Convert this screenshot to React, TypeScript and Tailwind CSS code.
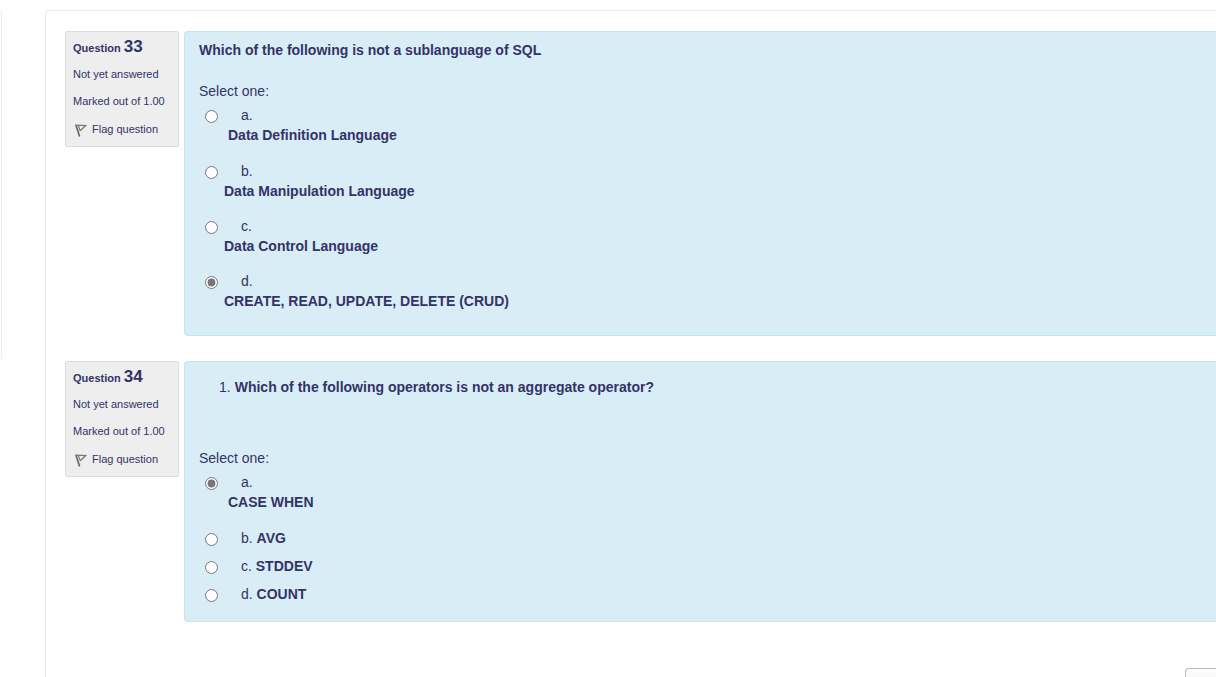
import React from "react";

type Option = { letter: string; text: string; stacked?: boolean; indent?: boolean };

type Question = {
  number: number;
  prompt: string;
  listed?: boolean;
  options: Option[];
  selected: string;
};

const questions: Question[] = [
  {
    number: 33,
    prompt: "Which of the following is not a sublanguage of SQL",
    selected: "d",
    options: [
      { letter: "a", text: "Data Definition Language", stacked: true, indent: true },
      { letter: "b", text: "Data Manipulation Language", stacked: true },
      { letter: "c", text: "Data Control Language", stacked: true },
      { letter: "d", text: "CREATE, READ, UPDATE, DELETE (CRUD)", stacked: true },
    ],
  },
  {
    number: 34,
    prompt: "Which of the following operators is not an aggregate operator?",
    listed: true,
    selected: "a",
    options: [
      { letter: "a", text: "CASE WHEN", stacked: true, indent: true },
      { letter: "b", text: "AVG" },
      { letter: "c", text: "STDDEV" },
      { letter: "d", text: "COUNT" },
    ],
  },
];

function FlagIcon() {
  return (
    <svg viewBox="0 0 12 13" className="mt-[5px] h-[13px] w-3 shrink-0" fill="none" aria-hidden="true">
      <path d="M1 1.2L4.6 12.4" stroke="#666" strokeWidth="1.7" />
      <path d="M0 1.2L10.6 1.7L5.2 6.8" stroke="#777" strokeWidth="1.3" />
      <path d="M3.4 1.6L5.3 7" stroke="#777" strokeWidth="1.2" />
    </svg>
  );
}

function QuestionInfo({ number }: { number: number }) {
  return (
    <aside className="w-[114px] shrink-0 rounded-xs border border-[#dcdcdc] bg-[#eeeeee] px-[7px] pt-[5px] pb-[7px] text-[11px] leading-5">
      <h3 className="mb-1.5 font-bold">
        Question <span className="text-[17px] leading-5">{number}</span>
      </h3>
      <p className="mb-[7px]">Not yet answered</p>
      <p className="mb-2">Marked out of 1.00</p>
      <a href="#flag" className="flex gap-[5px] pl-0.5">
        <FlagIcon />
        Flag question
      </a>
    </aside>
  );
}

function optionSpacing(option: Option) {
  if (option.indent) return "flex pb-4";
  return option.stacked ? "flex pb-[15px]" : "flex pb-2 last:pb-0";
}

function Answer({ option, question }: { option: Option; question: Question }) {
  const id = `q${question.number}-${option.letter}`;
  return (
    <div className={optionSpacing(option)}>
      <input
        type="radio"
        id={id}
        name={`q${question.number}`}
        defaultChecked={question.selected === option.letter}
        className="mt-[5px] ml-1.5 size-[13px] shrink-0 accent-[#767676]"
      />
      <label htmlFor={id} className={option.stacked ? "ml-1.5" : "ml-[23px]"}>
        {option.stacked ? (
          <>
            <span className="block pl-[17px]">{option.letter}.</span>
            <strong className={option.indent ? "block pl-1" : "block"}>{option.text}</strong>
          </>
        ) : (
          <>
            {option.letter}. <strong>{option.text}</strong>
          </>
        )}
      </label>
    </div>
  );
}

function QuestionBlock({ question }: { question: Question }) {
  return (
    <section className="mb-[25px] flex items-start gap-[5px]">
      <QuestionInfo number={question.number} />
      <div
        className={
          question.listed
            ? "min-w-0 flex-1 rounded-l border border-r-0 border-[#bce8f1] bg-[#d9edf7] pt-[15px] pb-[17px] pl-[14px]"
            : "min-w-0 flex-1 rounded-l border border-r-0 border-[#bce8f1] bg-[#d9edf7] pt-2 pb-[9px] pl-[14px]"
        }
      >
        {question.listed ? (
          <ol className="mb-[51px] pl-5">
            <li className="flex gap-1">
              <span>1.</span>
              <strong>{question.prompt}</strong>
            </li>
          </ol>
        ) : (
          <p className="mb-[21px] font-bold">{question.prompt}</p>
        )}
        <fieldset>
          <legend className="mb-1">Select one:</legend>
          {question.options.map((option) => (
            <Answer key={option.letter} option={option} question={question} />
          ))}
        </fieldset>
      </div>
    </section>
  );
}

export default function App() {
  return (
    <div className="flex h-screen items-start gap-[43px] overflow-hidden bg-white pt-2.5 font-['Liberation_Sans',Arial,sans-serif] text-sm leading-5 text-[#333366]">
      <div className="h-[350px] w-0.5 shrink-0 rounded-r border border-l-0 border-[#eeeeee]" />
      <main className="min-w-0 flex-1 rounded-tl border-t border-l border-[#e8e8e8] pt-5 pl-[19px]">
        {questions.map((question) => (
          <QuestionBlock key={question.number} question={question} />
        ))}
        <div className="flex justify-end pt-[21px]">
          <button
            type="button"
            aria-label="Next page"
            className="h-[30px] w-[31px] rounded-l border border-r-0 border-[#bbbbbb] bg-linear-to-b from-white to-[#e6e6e6]"
          />
        </div>
      </main>
    </div>
  );
}
